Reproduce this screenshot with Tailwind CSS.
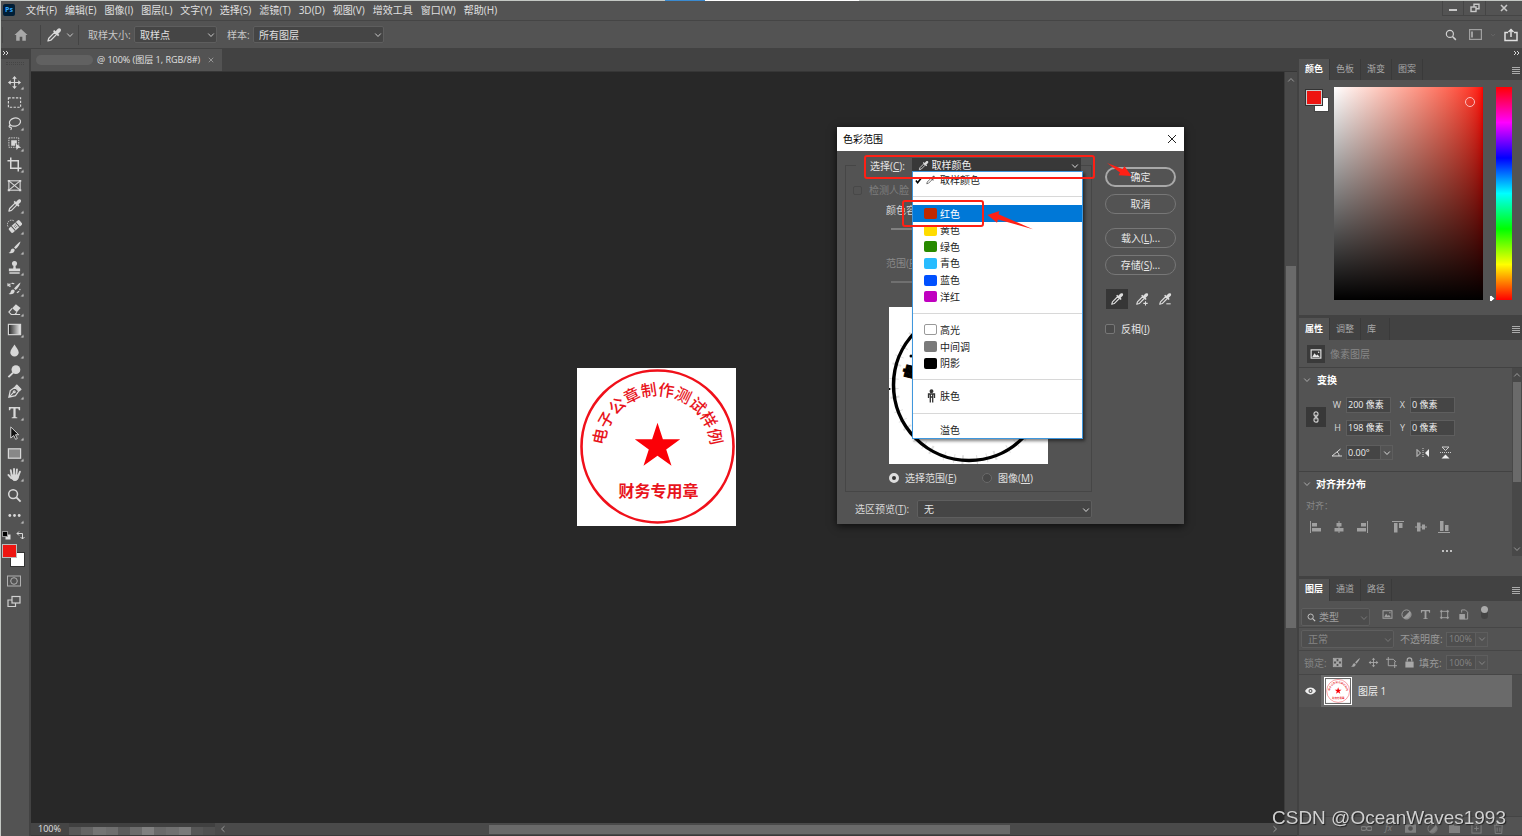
<!DOCTYPE html>
<html lang="zh-CN">
<head>
<meta charset="utf-8">
<title>Photoshop - 色彩范围</title>
<script src="https://cdn.jsdelivr.net/npm/@tailwindcss/browser@4"></script>
</head>
<body class="h-screen overflow-hidden bg-[#535353] font-['Open_Sans','Noto_Sans_CJK_SC',sans-serif] text-[10px] leading-4 text-[#d8d8d8]">

<svg class="hidden" aria-hidden="true">
  <symbol id="dropper" viewBox="0 0 16 16">
    <path d="M2 14l.8-2.8L8.6 5.400l2 2L4.800 13.200z" fill="none" stroke="currentColor" stroke-width="1.300" stroke-linejoin="round"/>
    <path d="M7 4.200l1.200-1.200 1.400 1.200 2-2.200c.9-.9 2.200-.9 2.900-.2s.7 2-.2 2.900l-2.100 2 1.100 1.300-1.200 1.200z" fill="currentColor"/>
  </symbol>
  <symbol id="chev" viewBox="0 0 8 8"><path d="M1.200 2.500L4 5.500l2.800-3" fill="none" stroke="currentColor" stroke-width="1"/></symbol>
  <symbol id="menu" viewBox="0 0 8 8"><path d="M0 1.500h8M0 3.500h8M0 5.500h8M0 7.500h8" stroke="currentColor" stroke-width="1"/></symbol>
  <symbol id="move" viewBox="0 0 16 16"><path d="M8 3v10M3 8h10" stroke="currentColor" stroke-width="1.300"/><path d="M8 1l2.500 3h-5zM8 15l2.500-3h-5zM1 8l3-2.500v5zM15 8l-3-2.500v5z" fill="currentColor"/></symbol>
  <symbol id="brush" viewBox="0 0 16 16"><path d="M14.500 1.500c-2 1-5.500 4.500-7 6.600l1.700 1.600c2-1.700 4.800-5.700 5.300-8.200zM6.700 9c-2 0-2.500 1.400-3 3-.3 1-1.200 1.600-2.200 1.700 2.700 1.200 6.500.6 6.800-3.200z" fill="currentColor"/></symbol>
  <symbol id="search" viewBox="0 0 16 16"><circle cx="6.500" cy="6.500" r="4.700" fill="none" stroke="currentColor" stroke-width="1.600"/><path d="M10 10l4.500 4.500" stroke="currentColor" stroke-width="2"/></symbol>
  <symbol id="picture" viewBox="0 0 16 16"><rect x="1.500" y="2.500" width="13" height="11" fill="none" stroke="currentColor" stroke-width="1.500"/><path d="M3 12l3-5 2.500 3 1.500-1.500 3 3.500z" fill="currentColor"/><circle cx="11.500" cy="5.500" r="1" fill="currentColor"/></symbol>
  <symbol id="seal" viewBox="0 0 159 158">
    <rect width="159" height="158" fill="#fff"/>
    <circle cx="80.500" cy="78.500" r="76" fill="none" stroke="#f0101a" stroke-width="2.600"/>
    <path id="sealArc" d="M27.500 80.500a53 53 0 0 1 106 0" fill="none"/>
    <text font-size="16" font-weight="500" fill="#e8141c" text-anchor="middle"><textPath href="#sealArc" startOffset="50%">电子公章制作测试样例</textPath></text>
    <path d="M80.500 54.700l5.400 16.500h17.300l-14 10.200 5.300 16.400-14-10.100-14 10.100 5.300-16.400-14-10.200h17.300z" fill="#fb0007"/>
    <text x="81.500" y="129" font-size="16" font-weight="700" fill="#e8141c" text-anchor="middle">财务专用章</text>
  </symbol>
</svg>

<div class="flex h-full flex-col border-l border-[#c4c8c4]">
  <div class="flex h-px shrink-0 bg-[#c4c8c4]"><span class="ml-[664px] h-px w-10 bg-[#3a8ad0]"></span><span class="h-px w-[154px] bg-white"></span></div>

  <!-- menu bar -->
  <header class="flex h-5 shrink-0 items-center border-b border-[#454545] pb-[2px] pl-[2px]">
    <div class="mr-[11px] flex h-3 w-3 items-center justify-center rounded-[2px] bg-[#001e36] text-[7px] font-bold leading-3 text-[#31a8ff]">Ps</div>
    <nav class="flex gap-2 whitespace-nowrap text-[#e0e0e0]">
      <button>文件(F)</button><button>编辑(E)</button><button>图像(I)</button><button>图层(L)</button><button>文字(Y)</button><button>选择(S)</button><button>滤镜(T)</button><button>3D(D)</button><button>视图(V)</button><button>增效工具</button><button>窗口(W)</button><button>帮助(H)</button>
    </nav>
    <div class="ml-auto flex h-[17px] self-start text-[#c8c8c8]">
      <button aria-label="最小化" class="flex h-[15px] w-[22px] items-center justify-center border-x border-b border-[#454545]"><span class="mt-1 h-[2px] w-2 bg-[#c8c8c8]"></span></button>
      <button aria-label="还原" class="flex h-[15px] w-[22px] items-center justify-center border-r border-b border-[#454545]"><svg class="h-2.5 w-2.5" viewBox="0 0 10 10" fill="none" stroke="currentColor" stroke-width="1.400"><rect x="1" y="4" width="5" height="4.500"/><path d="M4 4V1.200h5v4.600H6"/></svg></button>
      <button aria-label="关闭" class="flex h-[15px] w-9 items-center justify-center border-b border-[#454545]"><svg class="h-2 w-2" viewBox="0 0 8 8" stroke="currentColor" stroke-width="1.600"><path d="M1 1l6 6M7 1L1 7"/></svg></button>
    </div>
  </header>

  <!-- tool options -->
  <div class="flex h-7 shrink-0 items-center border-b border-[#424242] text-[#c8c8c8]">
    <span class="ml-px h-4 w-px bg-[#484848]"></span>
    <svg class="ml-[11px] h-[14px] w-[14px] text-[#a8a8a8]" viewBox="0 0 16 16" fill="currentColor"><path d="M8 1L0.500 8h2v6.500H6.500V10h3v4.500h4V8h2z"/></svg>
    <span class="mx-3 h-5 w-px bg-[#444]"></span>
    <svg class="-ml-[7px] h-4 w-4 text-[#d8d8d8]"><use href="#dropper"/></svg>
    <svg class="ml-1 h-2 w-2"><use href="#chev"/></svg>
    <span class="ml-1 mr-[9px] h-5 w-px bg-[#444]"></span>
    <label for="sample" class="w-[45px]">取样大小:</label>
    <div class="relative mr-[10px] ml-px w-[83px]">
      <select id="sample" class="block h-[17px] w-full appearance-none rounded-[2px] border border-[#5e5e5e] bg-[#454545] pl-[5px] text-[#e0e0e0]"><option>取样点</option></select>
      <svg class="pointer-events-none absolute right-0.5 top-[5px] h-2 w-2"><use href="#chev"/></svg>
    </div>
    <label for="sampleLayers" class="w-[25px]">样本:</label>
    <div class="relative ml-px w-[131px]">
      <select id="sampleLayers" class="block h-[17px] w-full appearance-none rounded-[2px] border border-[#5e5e5e] bg-[#454545] pl-[5px] text-[#e0e0e0]"><option>所有图层</option></select>
      <svg class="pointer-events-none absolute right-0.5 top-[5px] h-2 w-2"><use href="#chev"/></svg>
    </div>
    <div class="ml-auto flex items-center pr-1">
      <svg class="mr-3 h-3 w-3 text-[#d0d0d0]"><use href="#search"/></svg>
      <svg class="mr-2 h-[11px] w-[13px] text-[#a0a0a0]" viewBox="0 0 13 11" fill="none" stroke="currentColor" stroke-width="1.200"><rect x=".6" y=".6" width="11.800" height="9.800"/><path d="M3 2.500v6" stroke-width="2"/></svg>
      <svg class="mr-2 h-[6px] w-[6px] text-[#6a6a6a]"><use href="#chev"/></svg>
      <svg class="h-[14px] w-[14px] text-[#e0e0e0]" viewBox="0 0 14 14" fill="none" stroke="currentColor" stroke-width="1.500"><path d="M4 4.500H1v8h12v-8h-3M7 9V1.500M4.500 4L7 1.500 9.500 4"/></svg>
    </div>
  </div>

  <div class="flex min-h-0 flex-1 bg-[#424242]">

    <!-- tools -->
    <aside class="flex w-7 shrink-0 flex-col bg-[#535353] text-[#d8d8d8]">
      <div class="h-[10px] bg-[#424242] pl-px"><svg class="h-2 w-2" viewBox="0 0 8 8" fill="none" stroke="currentColor"><path d="M1 2l2 2-2 2M4 2l2 2-2 2"/></svg></div>
      <div class="mx-[5px] mt-[3px] mb-[9px] h-[3px] border-y border-dotted border-[#454545]"></div>
      <div class="mr-0.5 flex h-[450px] flex-col items-center justify-between [&>button]:relative [&>button]:h-4 [&>button]:w-full [&>button>svg]:mx-auto [&>button>svg]:h-[15px] [&>button>svg]:w-[15px] [&>button>i]:absolute [&>button>i]:right-[3px] [&>button>i]:bottom-0 [&>button>i]:border-2 [&>button>i]:border-t-transparent [&>button>i]:border-l-transparent [&>button>i]:border-r-[#b0b0b0] [&>button>i]:border-b-[#b0b0b0] [&>button>i]:h-0 [&>button>i]:w-0 [&>button>i]:scale-75">
        <button aria-label="移动"><svg><use href="#move"/></svg><i></i></button>
        <button aria-label="选框"><svg viewBox="0 0 16 16" fill="none" stroke="currentColor" stroke-width="1.200" stroke-dasharray="2.500 1.500"><rect x="1.500" y="3" width="13" height="10"/></svg><i></i></button>
        <button aria-label="套索"><svg viewBox="0 0 16 16" fill="none" stroke="currentColor" stroke-width="1.300"><ellipse cx="8.500" cy="6.500" rx="6" ry="4.300" transform="rotate(-12 8.500 6.500)"/><path d="M4 9.500c-2 .3-2.300 2.200-.7 2.400s1.900 1.600.5 2.800"/></svg><i></i></button>
        <button aria-label="对象选择"><svg viewBox="0 0 16 16"><rect x="2" y="2" width="10.500" height="10" fill="none" stroke="currentColor" stroke-dasharray="1.500 1"/><path d="M4.500 4.500h6v4l-2-1v3h-4z" fill="currentColor"/><path d="M9 7.500l6 5-3 .3-1.800 2.200z" fill="currentColor"/></svg><i></i></button>
        <button aria-label="裁剪"><svg viewBox="0 0 16 16" fill="none" stroke="currentColor" stroke-width="1.600"><path d="M4 .5V12h11.500M.5 4H12v11.500"/></svg><i></i></button>
        <button aria-label="图框"><svg viewBox="0 0 16 16" fill="none" stroke="currentColor" stroke-width="1.200"><rect x="2" y="3" width="12" height="10"/><path d="M2 3l12 10M14 3L2 13"/><path d="M.8 3h2.400M.8 13h2.400M12.800 3h2.400M12.800 13h2.400" stroke-width="2"/></svg></button>
        <button aria-label="吸管"><svg><use href="#dropper"/></svg><i></i></button>
        <button aria-label="修复画笔"><svg viewBox="0 0 16 16"><g transform="rotate(-42 9 8)"><rect x="1.500" y="4.800" width="15" height="6.400" rx="1.500" fill="currentColor"/><path d="M6 4.800v6.400M12 4.800v6.400" stroke="#535353"/><path d="M8 7h.8M9.600 7h.8M8 9h.8M9.600 9h.8" stroke="#535353" stroke-width="1.200"/></g><path d="M1 8a4.500 4.500 0 0 1 7-5.500" fill="none" stroke="currentColor" stroke-dasharray="1.500 1"/></svg><i></i></button>
        <button aria-label="画笔"><svg><use href="#brush"/></svg><i></i></button>
        <button aria-label="仿制图章"><svg viewBox="0 0 16 16" fill="currentColor"><circle cx="8" cy="3.700" r="2.700"/><path d="M7 5h2l.4 4H14v3H2V9h4.600zM2.500 13h11v1.700h-11z"/></svg><i></i></button>
        <button aria-label="历史记录画笔"><svg viewBox="0 0 16 16"><use href="#brush"/><path d="M1 2.500v3h3M1.500 5c1.500-2.500 4.500-3 6.500-2M10.500 12.500c2-.8 3-2 3.500-4" fill="none" stroke="currentColor" stroke-width="1.200" stroke-dasharray="3 1"/></svg><i></i></button>
        <button aria-label="橡皮擦"><svg viewBox="0 0 16 16"><path d="M9.500 2.500l5 4-4 4.500-5-4.300z" fill="currentColor"/><path d="M5.500 6.700L2 10.700l2.500 2.600h4l2-2.300M8 13.300h6" fill="none" stroke="currentColor" stroke-width="1.200"/></svg><i></i></button>
        <button aria-label="渐变"><svg viewBox="0 0 16 16"><defs><linearGradient id="toolGrad"><stop stop-color="#222"/><stop offset="1" stop-color="#eee"/></linearGradient></defs><rect x="1.500" y="2.500" width="13" height="11" fill="url(#toolGrad)" stroke="currentColor" stroke-width="1.200"/></svg><i></i></button>
        <button aria-label="模糊"><svg viewBox="0 0 16 16" fill="currentColor"><path d="M8 1.500C6.500 4.500 3.500 7 3.500 10a4.500 4.500 0 0 0 9 0c0-3-3-5.500-4.500-8.500z"/></svg><i></i></button>
        <button aria-label="减淡"><svg viewBox="0 0 16 16"><circle cx="9.500" cy="6" r="4.700" fill="currentColor"/><path d="M6.500 9.200L1.500 14" stroke="currentColor" stroke-width="2"/></svg><i></i></button>
        <button aria-label="钢笔"><svg viewBox="0 0 16 16" fill="none" stroke="currentColor" stroke-width="1.300"><path d="M2 14l1.500-7 5-3.500 4 4L9 12.500zM2 14l5-5"/><circle cx="7.700" cy="8.300" r="1"/><path d="M9 2.500l1.500-1.300 4.300 4.300L13.500 7z" fill="currentColor"/></svg><i></i></button>
        <button aria-label="文字"><svg viewBox="0 0 16 16" fill="currentColor"><path d="M2 2h12v3.500h-1.300L12 3.700H9.200v9l1.800.5V14H5v-.8l1.800-.5v-9H4l-.7 1.800H2z"/></svg><i></i></button>
        <button aria-label="路径选择"><svg viewBox="0 0 16 16"><path d="M4 1l8.500 8.300H9l2 4-1.800.9-2-4L4 12.800z" fill="#111" stroke="currentColor" stroke-width="1"/></svg><i></i></button>
        <button aria-label="矩形"><svg viewBox="0 0 16 16"><rect x="1.500" y="3" width="13" height="10" fill="#888" stroke="currentColor" stroke-width="1.300"/></svg><i></i></button>
        <button aria-label="抓手"><svg viewBox="0 0 16 16" fill="none" stroke="currentColor" stroke-width="2" stroke-linecap="round"><path d="M5 8.500L4 3.500M7.500 8V2M10 8.200l.6-5.700M12 9.500l1.800-4.500M4.500 12L1.500 8.500"/><path d="M4.500 8.500h8c0 3-1 6-4 6s-4-3-4-6z" fill="currentColor" stroke-width="1"/></svg><i></i></button>
        <button aria-label="缩放"><svg><use href="#search"/></svg></button>
        <button aria-label="更多工具"><svg viewBox="0 0 16 16" fill="currentColor"><circle cx="3" cy="8" r="1.500"/><circle cx="8" cy="8" r="1.500"/><circle cx="13" cy="8" r="1.500"/></svg><i></i></button>
      </div>
      <div class="mt-[7px] flex justify-between pr-1 pl-px">
        <svg class="h-[9px] w-[9px]" viewBox="0 0 9 9"><rect x="3.500" y="3.500" width="5" height="5" fill="#ddd"/><rect x=".5" y=".5" width="5" height="5" fill="#000" stroke="#999"/></svg>
        <svg class="h-[9px] w-[9px]" viewBox="0 0 9 9" fill="none" stroke="currentColor"><path d="M3 .5L1 2.500l2 2M1 2.500h5.500V8M4.500 6l2 2 2-2"/></svg>
      </div>
      <div class="relative mt-1 h-[23px] w-full">
        <span class="absolute top-2 left-[9px] h-[15px] w-[15px] border border-[#333] bg-white"></span>
        <span class="absolute top-0 left-px h-[14px] w-[15px] border border-[#bbb] bg-[#ee1511]"></span>
      </div>
      <svg class="mt-2 ml-[6px] h-3 w-[14px]" viewBox="0 0 14 12" fill="none" stroke="#b0b0b0"><rect x=".5" y="1" width="13" height="10"/><circle cx="7" cy="6" r="3.300"/></svg>
      <svg class="mt-2 ml-[6px] h-[14px] w-[16px]" viewBox="0 0 16 14" fill="none" stroke="#d0d0d0" stroke-width="1.200"><rect x="5" y="1.500" width="8" height="6.500"/><path d="M5 5H1v6.500h7.500V8"/></svg>
    </aside>

    <!-- document -->
    <main class="ml-0.5 flex min-w-0 flex-1 flex-col">
      <div class="flex h-[23px] shrink-0 border-b border-[#363636]">
        <div class="flex w-[191px] items-center bg-[#535353] pl-[5px] text-[#e0e0e0]">
          <span class="mr-1 h-2.5 w-[57px] rounded-full bg-[#616161]"></span>
          <span class="whitespace-nowrap text-[9px]">@ 100% (图层 1, RGB/8#)</span>
          <button aria-label="关闭文档" class="ml-2"><svg class="h-1.5 w-1.5" viewBox="0 0 8 8" stroke="#aaa"><path d="M1 1l6 6M7 1L1 7"/></svg></button>
        </div>
      </div>
      <div class="flex min-h-0 flex-1">
        <div class="relative flex flex-1 items-center justify-center bg-[#282828] pr-[3px] pb-0.5">
          <svg class="h-[158px] w-[159px]"><use href="#seal"/></svg>

          <!-- colour range dialog -->
          <section role="dialog" aria-label="色彩范围" class="absolute top-[55px] left-[806px] w-[347px] bg-[#535353] shadow-[0_2px_8px_rgba(0,0,0,0.7)]">
            <div class="flex h-6 items-center justify-between bg-white pr-2 pl-[6px] text-black">
              <span>色彩范围</span>
              <button aria-label="关闭"><svg class="h-2 w-2" viewBox="0 0 8 8" stroke="#222"><path d="M0 0l8 8M8 0L0 8"/></svg></button>
            </div>
            <div class="flex pt-[14px] pr-2 pb-[6px] pl-2">
              <div class="w-[247px]">
                <div class="h-[327px] border border-[#464646]">
                  <div class="mx-[10px] -mt-2 flex h-4 bg-[#535353] pl-[14px]">
                    <label for="pick" class="w-[42px] text-[#e4e4e4]">选择(<u>C</u>):</label>
                    <div class="relative w-[171px]">
                      <select id="pick" class="block h-[14px] w-full appearance-none bg-[#383838] pl-5 leading-[14px] text-[#f0f0f0]"><option>取样颜色</option></select>
                      <svg class="pointer-events-none absolute top-[2px] left-[6px] h-[11px] w-[11px] text-[#ddd]"><use href="#dropper"/></svg>
                      <svg class="pointer-events-none absolute top-[4px] right-[2px] h-2 w-2"><use href="#chev"/></svg>
                    </div>
                  </div>
                  <label class="mt-2 flex items-center gap-[7px] pl-[7px] text-[#7e7e7e]"><input type="checkbox" disabled class="h-[9px] w-[9px] appearance-none rounded-[2px] border border-[#484848]">检测人脸</label>
                  <label for="fuzz" class="mt-1 ml-10 block w-[26px] overflow-hidden whitespace-nowrap">颜色容差(<u>F</u>):</label>
                  <input id="fuzz" type="range" class="mt-[10px] ml-[45px] block h-[2px] w-[158px] appearance-none bg-[#808080] [&::-webkit-slider-thumb]:appearance-none">
                  <label for="range" class="mt-[25px] ml-10 block w-[26px] overflow-hidden whitespace-nowrap text-[#8a8a8a]">范围(<u>R</u>):</label>
                  <input id="range" type="range" disabled class="mt-[10px] ml-[45px] block h-[2px] w-[158px] appearance-none bg-[#707070] [&::-webkit-slider-thumb]:appearance-none">
                  <svg class="mt-6 ml-[43px] block h-[157px] w-[159px] bg-white" viewBox="0 0 159 157">
                    <circle cx="80" cy="78" r="75" fill="none" stroke="#aaa" stroke-width="9" stroke-dasharray="1 9 1 13 2 7" opacity=".35"/>
                    <circle cx="80" cy="78" r="75.500" fill="none" stroke="#000" stroke-width="3.500"/>
                    <text x="-8" y="6" font-size="15" font-weight="900" stroke="#000" transform="translate(21 64) rotate(-76)">电</text>
                    <circle cx="22" cy="49" r="1.500"/><circle cx=".5" cy="82" r="1"/>
                  </svg>
                  <div class="mt-[6px] flex pl-[43px] text-[#e0e0e0]">
                    <label class="flex w-[93px] items-center gap-[6px]"><input type="radio" name="view" checked class="h-[10px] w-[10px] appearance-none rounded-full border-[3px] border-[#dedede] bg-[#333]"><span>选择范围(<u>E</u>)</span></label>
                    <label class="flex items-center gap-[6px]"><input type="radio" name="view" class="h-[10px] w-[10px] appearance-none rounded-full border border-[#6a6a6a] bg-[#484848]"><span>图像(<u>M</u>)</span></label>
                  </div>
                </div>
                <div class="mt-2 flex items-center pl-[10px]">
                  <label for="preview" class="w-[62px]">选区预览(<u>T</u>):</label>
                  <div class="relative flex-1">
                    <select id="preview" class="block h-[18px] w-full appearance-none rounded-[2px] border border-[#5e5e5e] bg-[#454545] pl-[6px] text-[#e4e4e4]"><option>无</option></select>
                    <svg class="pointer-events-none absolute top-[6px] right-0.5 h-2 w-2"><use href="#chev"/></svg>
                  </div>
                </div>
              </div>
              <div class="ml-[13px] w-[71px] pt-[2px] text-[#e8e8e8]">
                <button class="block h-5 w-full rounded-full border-2 border-[#a8a8a8]">确定</button>
                <button class="mt-[7px] block h-5 w-full rounded-full border border-[#777]">取消</button>
                <button class="mt-[14px] block h-5 w-full rounded-full border border-[#777]">载入(<u>L</u>)...</button>
                <button class="mt-[7px] block h-5 w-full rounded-full border border-[#777]">存储(<u>S</u>)...</button>
                <div class="mt-[14px] flex justify-between pr-0.5 pl-px text-[#ddd]">
                  <button aria-label="吸管" class="flex h-5 w-[22px] items-center justify-center bg-[#363636]"><svg class="h-[14px] w-[14px]"><use href="#dropper"/></svg></button>
                  <button aria-label="添加到取样" class="flex h-5 w-[22px] items-center justify-center"><svg class="h-[14px] w-[14px]" viewBox="0 0 16 16"><use href="#dropper"/><path d="M9.500 13h5M12 10.500v5" stroke="currentColor" stroke-width="1.200"/></svg></button>
                  <button aria-label="从取样中减去" class="flex h-5 w-[18px] items-center justify-center"><svg class="h-[14px] w-[14px]" viewBox="0 0 16 16"><use href="#dropper"/><path d="M9.500 13.500h5" stroke="currentColor" stroke-width="1.200"/></svg></button>
                </div>
                <label class="mt-3 flex items-center gap-[6px]"><input type="checkbox" class="h-[10px] w-[10px] appearance-none rounded-[2px] border border-[#777] bg-[#4a4a4a]"><span>反相(<u>I</u>)</span></label>
              </div>
            </div>

            <!-- open list of the selection drop-down -->
            <div role="listbox" class="absolute top-11 left-[75px] flex h-[268px] w-[171px] flex-col border border-[#3f97dd] bg-white text-[#222] shadow-[2px_2px_3px_rgba(0,0,0,0.5)] [&>button]:flex [&>button]:min-h-0 [&>button]:flex-1 [&>button]:items-center [&>button]:pl-[11px] [&>hr]:m-0 [&>hr]:flex-1 [&>hr]:border-0 [&>hr]:bg-linear-to-b [&>hr]:from-[#d8d8d8] [&>hr]:to-[#d8d8d8] [&>hr]:bg-[length:100%_1px] [&>hr]:bg-center [&>hr]:bg-no-repeat">
              <button role="option"><svg class="-ml-[9px] mr-[3px] h-[7px] w-[7px] shrink-0" viewBox="0 0 8 8" fill="none" stroke="#000" stroke-width="1.800"><path d="M1 4l2 2.500L7 1.500"/></svg><svg class="mr-1 h-[10px] w-[11px] shrink-0 text-[#555]"><use href="#dropper"/></svg>取样颜色</button>
              <hr>
              <button role="option" aria-selected="true" class="bg-[#0078d7] text-white"><span class="mr-[3px] h-[11px] w-[13px] rounded-[2px] bg-[#c02800]"></span>红色</button>
              <button role="option"><span class="mr-[3px] h-[11px] w-[13px] rounded-[2px] bg-[#ffdc00]"></span>黄色</button>
              <button role="option"><span class="mr-[3px] h-[11px] w-[13px] rounded-[2px] bg-[#288a00]"></span>绿色</button>
              <button role="option"><span class="mr-[3px] h-[11px] w-[13px] rounded-[2px] bg-[#28bcff]"></span>青色</button>
              <button role="option"><span class="mr-[3px] h-[11px] w-[13px] rounded-[2px] bg-[#0050ff]"></span>蓝色</button>
              <button role="option"><span class="mr-[3px] h-[11px] w-[13px] rounded-[2px] bg-[#c000c0]"></span>洋红</button>
              <hr>
              <button role="option"><span class="mr-[3px] h-[11px] w-[13px] rounded-[2px] border border-[#999] bg-white"></span>高光</button>
              <button role="option"><span class="mr-[3px] h-[11px] w-[13px] rounded-[2px] bg-[#7a7a7a]"></span>中间调</button>
              <button role="option"><span class="mr-[3px] h-[11px] w-[13px] rounded-[2px] bg-black"></span>阴影</button>
              <hr>
              <button role="option"><svg class="mr-[3px] h-[14px] w-[13px]" viewBox="0 0 12 14" fill="none" stroke="#333" stroke-width="1.300"><circle cx="7" cy="2.200" r="1.300" fill="#333"/><path d="M4 9V5h6v4M5.800 5v8.500M8.200 5v8.500M6 8h2"/></svg>肤色</button>
              <hr>
              <button role="option"><span class="mr-[3px] w-[13px]"></span>溢色</button>
            </div>

            <!-- red annotations -->
            <span class="pointer-events-none absolute top-7 left-[27px] h-6 w-[231px] rounded-[3px] border-2 border-[#ff2015]"></span>
            <span class="pointer-events-none absolute top-[73px] left-[65px] h-[27px] w-[82px] rounded-[3px] border-2 border-[#ff2015]"></span>
            <svg class="pointer-events-none absolute top-0 left-0 h-[120px] w-[347px]" viewBox="0 0 347 120" fill="#ff2015">
              <path d="M270 36L285.500 42l2-2.800 7 9.800-13-.8 1.500-2.700z"/>
              <path d="M150.500 88l12-4-1 3.300 34.500 14.900-35-9.700-1 3.300z"/>
            </svg>
          </section>
        </div>
        <div class="flex w-[13px] shrink-0 flex-col items-center border-l border-[#3c3c3c] bg-[#4a4a4a] pt-1">
          <svg class="h-2 w-2 rotate-180 text-[#999]"><use href="#chev"/></svg>
          <span class="mt-[182px] h-[362px] w-[10px] bg-[#6a6a6a]"></span>
        </div>
      </div>
      <footer class="flex h-[13px] shrink-0 items-center border-b border-[#3a3a3a] bg-[#4a4a4a] text-[9px] leading-3">
        <span class="w-[38px] bg-[#454545] pl-[7px] text-[#e0e0e0]">100%</span>
        <span class="flex h-full w-[146px] items-end border-t-4 border-[#404040] bg-[#686868] [&>i]:h-full [&>i]:flex-1"><i class="bg-[#585858]"></i><i class="bg-[#646464]"></i><i class="bg-[#747474]"></i><i class="bg-[#6e6e6e]"></i><i class="bg-[#5c5c5c]"></i><i class="bg-[#6c6c6c]"></i><i class="bg-[#808080]"></i><i class="bg-[#6a6a6a]"></i><i class="bg-[#707070]"></i><i class="bg-[#7a7a7a]"></i><i class="bg-[#565656]"></i><i class="bg-[#505050]"></i></span>
        <svg class="ml-1 h-2 w-2 rotate-90 text-[#999]"><use href="#chev"/></svg>
        <span class="ml-[262px] h-[9px] w-[521px] bg-[#6a6a6a]"></span>
        <svg class="mr-[18px] ml-auto h-2 w-2 -rotate-90 text-[#999]"><use href="#chev"/></svg>
      </footer>
    </main>

    <!-- panels -->
    <aside class="ml-0.5 flex w-[223px] shrink-0 flex-col gap-[3px]">
      <section class="bg-[#535353]">
        <div class="flex h-[10px] justify-end bg-[#424242] pr-px"><svg class="h-2 w-2" viewBox="0 0 8 8" fill="none" stroke="currentColor"><path d="M1 2l2 2-2 2M4 2l2 2-2 2"/></svg></div>
        <div class="flex h-[21px] items-center bg-[#424242] text-[9px] text-[#a8a8a8] [&>button]:h-full [&>button]:border-r [&>button]:border-[#3a3a3a] [&>button]:px-[6px] [&>button]:pb-0.5">
          <button class="bg-[#535353] font-semibold text-white">颜色</button><button>色板</button><button>渐变</button><button>图案</button>
          <svg class="mr-0.5 ml-auto h-2 w-2 text-[#aaa]"><use href="#menu"/></svg>
        </div>
        <div class="flex h-[235px] pt-[7px] pr-[10px] pl-[7px]">
          <div class="relative mt-[3px] h-6 w-7 shrink-0">
            <span class="absolute top-[7px] left-2 h-[15px] w-[15px] border border-[#444] bg-white"></span>
            <span class="absolute top-0 left-0 h-[15px] w-4 border border-[#ccc] bg-[#ee1511] outline-1 outline-[#333]"></span>
          </div>
          <div class="relative h-[213px] flex-1 bg-linear-to-r from-white to-[#f00]">
            <div class="h-full bg-linear-to-t from-black to-transparent"></div>
            <span class="absolute top-[10px] right-2 h-[10px] w-[10px] rounded-full border border-[#fbc0c0]"></span>
          </div>
          <svg class="mt-[207px] ml-1 h-2 w-[9px] shrink-0" viewBox="0 0 9 8"><path d="M2.500 1.500h2L8 4.500 4.500 7.500h-2z" fill="#fff" stroke="#333" stroke-width=".7"/></svg>
          <div class="h-[213px] w-4 shrink-0 bg-[linear-gradient(#f00,#f0f,#00f,#0ff,#0f0,#ff0,#f00)]"></div>
        </div>
      </section>

      <section class="bg-[#535353]">
        <div class="flex h-[22px] items-center bg-[#424242] text-[9px] text-[#a8a8a8] [&>button]:h-full [&>button]:border-r [&>button]:border-[#3a3a3a] [&>button]:px-[6px]">
          <button class="bg-[#535353] font-semibold text-white">属性</button><button>调整</button><button class="w-[29px] text-left">库</button>
          <svg class="mr-0.5 ml-auto h-2 w-2 text-[#aaa]"><use href="#menu"/></svg>
        </div>
        <div class="flex h-7 items-center gap-[5px] border-b border-[#424242] pl-2 text-[#888]">
          <span class="flex h-[18px] w-[18px] items-center justify-center bg-[#3a3a3a] text-[#e8e8e8]"><svg class="h-3 w-3"><use href="#picture"/></svg></span>像素图层
        </div>
        <div class="flex">
          <div class="min-w-0 flex-1">
            <div class="h-[104px] border-b border-[#424242]">
              <h3 class="flex items-center gap-[6px] pt-1 pl-1 font-bold text-white"><svg class="h-2 w-2 text-[#aaa]"><use href="#chev"/></svg>变换</h3>
              <div class="mt-[9px] flex items-center">
                <span class="ml-[7px] flex h-5 w-5 items-center justify-center bg-[#383838]"><svg class="h-3 w-2" viewBox="0 0 8 12" fill="none" stroke="#ccc" stroke-width="1.200"><rect x="2" y=".8" width="4" height="4.500" rx="2"/><rect x="2" y="6.700" width="4" height="4.500" rx="2"/><path d="M4 3.500v5"/></svg></span>
                <div class="grid grid-cols-[20px_45px_19px_45px] gap-y-[7px] text-right text-[9px] [&>input]:h-4 [&>input]:w-full [&>input]:border [&>input]:border-[#5e5e5e] [&>input]:bg-[#454545] [&>input]:pl-px [&>input]:text-[#f0f0f0] [&>label]:pr-[5px]">
                  <label for="w">W</label><input id="w" value="200 像素"><label for="x">X</label><input id="x" value="0 像素">
                  <label for="h">H</label><input id="h" value="198 像素"><label for="y">Y</label><input id="y" value="0 像素">
                </div>
              </div>
              <div class="mt-[9px] flex h-[15px] items-center text-[9px]">
                <svg class="mr-1 ml-8 h-[9px] w-[11px]" viewBox="0 0 11 9" fill="none" stroke="currentColor"><path d="M9.500 1L1 8h10M6 4c1.500 1 2 2 2 4"/></svg>
                <input aria-label="角度" value="0.00°" class="h-[15px] w-[35px] border border-[#5e5e5e] bg-[#454545] pl-px text-[#f0f0f0]">
                <button aria-label="角度选项" class="flex h-[15px] w-3 items-center justify-center border border-l-0 border-[#5e5e5e]"><svg class="h-2 w-2"><use href="#chev"/></svg></button>
                <svg class="ml-[23px] h-[10px] w-[14px]" viewBox="0 0 14 10"><path d="M1 1.500v7L4.500 5z" fill="none" stroke="#ccc"/><path d="M13 1v8L9 5z" fill="#eee"/><path d="M7 0v10" stroke="#ccc" stroke-dasharray="1 1"/></svg>
                <svg class="ml-[10px] h-[13px] w-[11px]" viewBox="0 0 11 13"><path d="M2 1h7L5.500 4.500z" fill="none" stroke="#ccc"/><path d="M1.500 12.500h8L5.500 8.500z" fill="#eee"/><path d="M0 6.500h11" stroke="#ccc" stroke-dasharray="1 1"/></svg>
              </div>
            </div>
            <div class="h-[104px]">
              <h3 class="flex items-center gap-[5px] pt-1 pl-1 font-bold text-white"><svg class="h-2 w-2 text-[#aaa]"><use href="#chev"/></svg>对齐并分布</h3>
              <p class="mt-[6px] pl-[7px] text-[9px] text-[#888]">对齐：</p>
              <div class="mt-[7px] flex pl-[11px] text-[#a0a0a0] [&>svg]:mr-[11px] [&>svg]:h-3 [&>svg]:w-3">
                <svg viewBox="0 0 12 12" fill="currentColor"><path d="M0 0h1v12H0zM2 2h5v3.500H2zM2 7h9v3.500H2z"/></svg>
                <svg viewBox="0 0 12 12" fill="currentColor"><path d="M5.500 0h1v12h-1zM3.500 2h5v3.500h-5zM1.500 7h9v3.500h-9z"/></svg>
                <svg viewBox="0 0 12 12" fill="currentColor"><path d="M11 0h1v12h-1zM5 2h5v3.500H5zM1 7h9v3.500H1z"/></svg>
                <span class="w-[13px]"></span>
                <svg viewBox="0 0 12 12" fill="currentColor"><path d="M0 0h12v1H0zM2 2h3.500v9.500H2zM7 2h3.500v5H7z"/></svg>
                <svg viewBox="0 0 12 12" fill="currentColor"><path d="M0 5.500h12v1H0zM2 1.500h3.500v9H2zM7 3.500h3v5H7z"/></svg>
                <svg viewBox="0 0 12 12" fill="currentColor"><path d="M0 11h12v1H0zM2 0h3.500v10H2zM7 4h3.500v6H7z"/></svg>
              </div>
              <button aria-label="更多选项" class="mt-[17px] ml-[143px] flex gap-[2px] [&>i]:h-[2px] [&>i]:w-[2px] [&>i]:rounded-full [&>i]:bg-[#e4e4e4]"><i></i><i></i><i></i></button>
            </div>
          </div>
          <div class="flex h-[188px] w-[10px] shrink-0 flex-col items-center justify-between bg-[#484848] py-[3px] text-[#999]"><svg class="h-2 w-2 rotate-180"><use href="#chev"/></svg><span class="mt-[3px] mb-auto h-[100px] w-2 bg-[#6a6a6a]"></span><svg class="h-2 w-2"><use href="#chev"/></svg></div>
        </div>
      </section>

      <section class="flex min-h-0 flex-1 flex-col bg-[#535353]">
        <div class="flex h-[22px] shrink-0 items-center bg-[#424242] text-[9px] text-[#a8a8a8] [&>button]:h-full [&>button]:border-r [&>button]:border-[#3a3a3a] [&>button]:px-[6px] [&>button]:pb-0.5">
          <button class="bg-[#535353] font-semibold text-white">图层</button><button>通道</button><button>路径</button>
          <svg class="mr-0.5 ml-auto h-2 w-2 text-[#aaa]"><use href="#menu"/></svg>
        </div>
        <div class="flex h-[27px] shrink-0 items-end border-b border-[#464646] pb-px pl-0.5 text-[#a0a0a0]">
          <div class="relative mr-3 w-[69px]">
            <select aria-label="筛选类型" class="block h-[18px] w-full appearance-none rounded-[2px] border border-[#5e5e5e] bg-[#4c4c4c] pl-[17px]"><option>类型</option></select>
            <svg class="pointer-events-none absolute top-[5px] left-[6px] h-[9px] w-[9px] text-[#ccc]"><use href="#search"/></svg>
            <svg class="pointer-events-none absolute top-[6px] right-0.5 h-2 w-2 text-[#777]"><use href="#chev"/></svg>
          </div>
          <div class="flex items-center gap-2 pb-1 [&>svg]:h-[11px] [&>svg]:w-[11px]">
            <svg><use href="#picture"/></svg>
            <svg viewBox="0 0 12 12"><circle cx="6" cy="6" r="5" fill="none" stroke="currentColor"/><path d="M9.500 2.500a5 5 0 0 1-7 7z" fill="currentColor"/></svg>
            <svg viewBox="0 0 12 12" fill="currentColor"><path d="M1 1h10v3h-1l-.5-1.500H7V10l1.500.3V11h-5v-.7L5 10V2.500H2.500L2 4H1z"/></svg>
            <svg viewBox="0 0 12 12" fill="none" stroke="currentColor"><rect x="2.500" y="2.500" width="7" height="7"/><path d="M1 2.500h3M8 2.500h3M1 9.500h3M8 9.500h3M2.500 1v3M9.500 1v3M2.500 8v3M9.500 8v3"/></svg>
            <svg viewBox="0 0 12 12" fill="none" stroke="currentColor"><path d="M4 4V1h4l2.500 2.500V11H7"/><rect x="2" y="6" width="5" height="5" fill="currentColor"/></svg>
            <span class="mb-[3px] ml-1 h-[13px] w-[7px] rounded-full bg-[#444]"><i class="block h-[7px] w-[7px] rounded-full bg-[#aaa]"></i></span>
          </div>
        </div>
        <div class="flex h-[23px] shrink-0 items-center border-b border-[#464646] pl-0.5 text-[#858585]">
          <div class="relative mr-[6px] w-[93px]">
            <select aria-label="混合模式" class="block h-[18px] w-full appearance-none rounded-[2px] border border-[#5e5e5e] bg-[#4e4e4e] pl-[6px]"><option>正常</option></select>
            <svg class="pointer-events-none absolute top-[6px] right-0.5 h-2 w-2 text-[#777]"><use href="#chev"/></svg>
          </div>
          <label for="opacity" class="w-[46px] whitespace-nowrap text-[#999]">不透明度:</label>
          <input id="opacity" value="100%" class="h-[15px] w-[30px] border border-[#5e5e5e] bg-[#4e4e4e] pl-[2px] text-[9px]">
          <button aria-label="不透明度选项" class="flex h-[15px] w-3 items-center justify-center border border-l-0 border-[#5e5e5e]"><svg class="h-2 w-2"><use href="#chev"/></svg></button>
        </div>
        <div class="flex h-6 shrink-0 items-center border-b border-[#464646] pl-[5px] text-[#858585]">
          <span class="w-7">锁定:</span>
          <div class="flex w-[87px] gap-[7px] text-[#a8a8a8] [&>svg]:h-[11px] [&>svg]:w-[11px]">
            <svg viewBox="0 0 12 12"><rect x="1.500" y="1.500" width="9" height="9" fill="none" stroke="currentColor"/><path d="M2 2h3v3H2zM7 2h3v3H7zM4.500 4.500h3v3h-3zM2 7h3v3H2zM7 7h3v3H7z" fill="currentColor"/></svg>
            <svg><use href="#brush"/></svg>
            <svg><use href="#move"/></svg>
            <svg viewBox="0 0 12 12" fill="none" stroke="currentColor"><path d="M0 2.500h8l3 3M2.500 0v9.500H12M9.500 5v7"/></svg>
            <svg viewBox="0 0 12 12"><rect x="1.500" y="5" width="9" height="6.500" fill="currentColor"/><path d="M3.500 5V3.500a2.500 2.500 0 0 1 5 0V5" fill="none" stroke="currentColor" stroke-width="1.300"/></svg>
          </div>
          <label for="fill" class="w-[27px] text-[#999]">填充:</label>
          <input id="fill" value="100%" class="h-[15px] w-[30px] border border-[#5e5e5e] bg-[#4e4e4e] pl-[2px] text-[9px]">
          <button aria-label="填充选项" class="flex h-[15px] w-3 items-center justify-center border border-l-0 border-[#5e5e5e]"><svg class="h-2 w-2"><use href="#chev"/></svg></button>
        </div>
        <div class="min-h-0 flex-1 bg-[#4d4d4d]">
          <div class="mr-[10px] flex h-8 items-center bg-[#535353]">
            <button aria-label="图层可见性" class="flex w-[22px] justify-center"><svg class="h-2 w-[11px] text-[#eee]" viewBox="0 0 12 8"><path d="M0 4c3-5 9-5 12 0-3 5-9 5-12 0z" fill="currentColor"/><circle cx="6" cy="4" r="2.200" fill="#535353"/><circle cx="6" cy="4" r="1" fill="currentColor"/></svg></button>
            <div class="flex h-full flex-1 items-center bg-[#6a6a6a] pl-[3px] text-[#eee]">
              <span class="mr-[6px] flex h-7 w-7 items-center justify-center border border-white"><svg class="h-6 w-6"><use href="#seal"/></svg></span>图层 1
            </div>
          </div>
        </div>
        <div class="flex h-5 shrink-0 items-center justify-end gap-[11px] border-t border-b border-[#444] pt-1 pr-[18px] text-[#808080] [&>svg]:h-[11px] [&>svg]:w-[11px]">
          <svg viewBox="0 0 12 12" fill="none" stroke="currentColor" stroke-width="1.300"><rect x="0" y="4" width="6" height="4" rx="2"/><rect x="6" y="4" width="6" height="4" rx="2"/></svg>
          <span class="w-[11px] text-center text-[9px] italic leading-3">fx</span>
          <svg viewBox="0 0 12 12"><path fill-rule="evenodd" d="M0 1.500h12v9H0zM6 3.500a2.500 2.500 0 1 0 .01 0z" fill="currentColor"/></svg>
          <svg viewBox="0 0 12 12"><circle cx="6" cy="6" r="5" fill="none" stroke="currentColor"/><path d="M9.500 2.500a5 5 0 0 1-7 7z" fill="currentColor"/></svg>
          <svg viewBox="0 0 12 12" fill="currentColor"><path d="M0 1.500h5l1 1.500h6v8H0z"/></svg>
          <svg viewBox="0 0 12 12" fill="none" stroke="currentColor"><rect x="1" y="1" width="10" height="10"/><path d="M6 3.500v5M3.500 6h5"/></svg>
          <svg viewBox="0 0 12 12" fill="none" stroke="currentColor"><path d="M1 2.500h10M4 2V.5h4V2M2 3l.5 8.500h7L10 3M4.500 5v4.500M7.500 5v4.500"/></svg>
        </div>
      </section>
    </aside>
  </div>
</div>
<p class="pointer-events-none fixed right-4 bottom-[6px] font-['Liberation_Sans',sans-serif] text-[19px] leading-6 whitespace-nowrap text-[#d0d0d0] [text-shadow:1px_1px_1px_#222]">CSDN @OceanWaves1993</p>
</body>
</html>
